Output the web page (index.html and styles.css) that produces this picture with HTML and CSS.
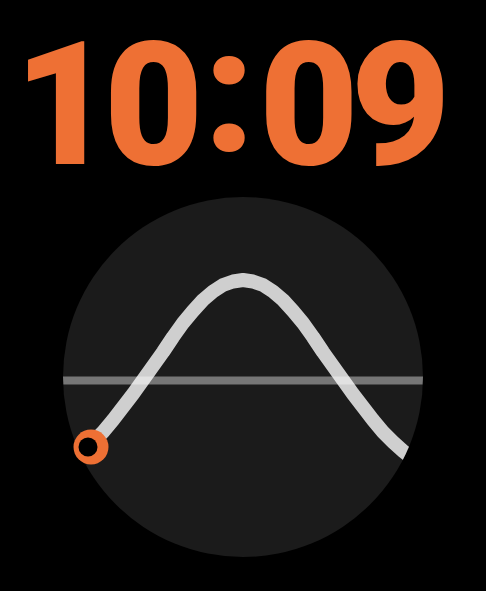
FILE: index.html
```html
<!DOCTYPE html>
<html lang="en">
<head>
<meta charset="utf-8">
<title>Solar</title>
<link rel="stylesheet" href="styles.css">
</head>
<body>
<main class="face">
  <div class="time"><span class="digit one">1</span><span class="digit">0</span><span class="colon">:</span><span class="digit after-colon">0</span><span class="digit">9</span></div>
  <div class="dial">
    <svg class="dial-svg" width="360" height="360" viewBox="0 0 360 360">
      <defs>
        <clipPath id="disc"><circle cx="180" cy="180" r="180"/></clipPath>
      </defs>
      <circle cx="180" cy="180" r="180" fill="#1b1b1b"/>
      <g clip-path="url(#disc)">
        <path class="curve" d="M28,247 L30,245 L40,235 L50,223 L60,210 L70,197 L80,183 L90,169 L100,155 L110,140 L120,126 L130,114 L140,103 L150,94.5 L160,88 L170,84.5 L180,83 L190,84.5 L200,88 L210,94.5 L220,103 L230,114 L240,126 L250,140 L260,155 L270,169 L280,183 L290,197 L300,210 L310,223 L320,235 L330,245 L340,254 L350,262 L360,269"/>
        <rect class="horizon" x="0" y="179.5" width="360" height="8"/>
      </g>
      <circle cx="28" cy="250" r="17.5" fill="#ee7034"/>
      <circle cx="25" cy="250" r="9.5" fill="#000"/>
    </svg>
  </div>
</main>
</body>
</html>
```
FILE: styles.css
```css
html, body {
  margin: 0;
  padding: 0;
  background: #000;
}
.face {
  width: 486px;
  height: 591px;
  display: flex;
  flex-direction: column;
  align-items: center;
}
.time {
  align-self: flex-start;
  margin: 0 0 0 14px;
  font-family: Roboto, "Liberation Sans", sans-serif;
  font-weight: 900;
  font-size: 172px;
  line-height: 184px;
  color: #ee7034;
  white-space: nowrap;
}
.one {
  letter-spacing: -10px;
}
.colon {
  vertical-align: 13px;
  letter-spacing: 4px;
}
.after-colon {
  letter-spacing: -8px;
}
.dial {
  width: 360px;
  height: 360px;
}
.dial-svg {
  display: block;
  overflow: visible;
}
.curve {
  fill: none;
  stroke: #cfcfcf;
  stroke-width: 14;
  stroke-linejoin: round;
  stroke-linecap: butt;
}
.horizon {
  fill: rgba(255, 255, 255, 0.4);
}
```
